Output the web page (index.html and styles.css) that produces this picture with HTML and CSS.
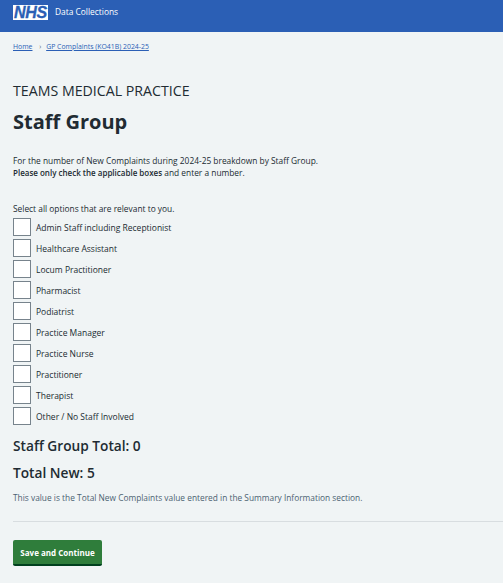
FILE: index.html
```html
<!DOCTYPE html>
<html lang="en">
<head>
<meta charset="UTF-8">
<title>Staff Group</title>
<link rel="stylesheet" href="styles.css">
</head>
<body>
<header class="top">
  <a class="logo" href="#"><span>NHS</span></a>
  <span class="service">Data Collections</span>
</header>
<nav class="crumbs">
  <a href="#">Home</a>
  <span class="sep">›</span>
  <a href="#">GP Complaints (KO41B) 2024-25</a>
</nav>
<main class="main">
  <p class="caption">TEAMS MEDICAL PRACTICE</p>
  <h1>Staff Group</h1>
  <p class="intro">For the number of New Complaints during 2024-25 breakdown by Staff Group.<br><b>Please only check the applicable boxes</b> and enter a number.</p>
  <p class="hint">Select all options that are relevant to you.</p>
  <ul class="options">
    <li><span class="box"></span>Admin Staff including Receptionist</li>
    <li><span class="box"></span>Healthcare Assistant</li>
    <li><span class="box"></span>Locum Practitioner</li>
    <li><span class="box"></span>Pharmacist</li>
    <li><span class="box"></span>Podiatrist</li>
    <li><span class="box"></span>Practice Manager</li>
    <li><span class="box"></span>Practice Nurse</li>
    <li><span class="box"></span>Practitioner</li>
    <li><span class="box"></span>Therapist</li>
    <li><span class="box"></span>Other / No Staff Involved</li>
  </ul>
  <h2 class="total-a">Staff Group Total: 0</h2>
  <h2 class="total-b">Total New: 5</h2>
  <p class="note">This value is the Total New Complaints value entered in the Summary Information section.</p>
  <hr class="rule">
  <button class="save" type="button">Save and Continue</button>
</main>
</body>
</html>
```

FILE: styles.css
```css
*{margin:0;padding:0;box-sizing:border-box;}
body{background:#f0f4f5;color:#212b32;font-family:"Open Sans","Noto Sans","Liberation Sans",sans-serif;font-size:8.5px;overflow:hidden;}
.top{height:32px;background:#2b5fb5;display:flex;align-items:flex-start;padding:5px 0 0 13px;gap:7px;}
.logo{width:35px;height:15px;background:#fff;display:flex;align-items:center;justify-content:center;text-decoration:none;}
.logo span{color:#2b5fb5;font:italic 700 16px/15px "Liberation Sans",sans-serif;letter-spacing:-0.3px;-webkit-text-stroke:0.3px #2b5fb5;}
.service{color:#fff;font-size:8.4px;line-height:14px;}
.crumbs{padding:10px 0 0 13px;height:39px;font-size:6.9px;line-height:10px;color:#4c6272;}
.crumbs a{color:#2b5fb5;}
.crumbs .sep{margin:0 3px 0 5px;}
.main{padding:0 0 0 13px;}
.caption{font-size:14.2px;line-height:18px;margin-top:11px;}
h1{font-size:20px;line-height:28px;font-weight:700;margin-top:8px;}
.intro{font-size:8.37px;line-height:12px;margin-top:19px;}
.intro b{font-size:8px;font-weight:600;}
.hint{font-size:8.37px;line-height:12px;margin-top:24px;}
.options{list-style:none;margin-top:3px;display:flex;flex-direction:column;gap:3px;}
.options li{display:flex;align-items:center;height:18px;font-size:8.5px;gap:5px;}
.box{width:18px;height:18px;background:#fff;border:1.5px solid #77838c;}
h2{font-size:13.7px;line-height:19px;font-weight:600;}
.total-a{margin-top:11px;}
.total-b{margin-top:8px;}
.note{font-size:8.35px;line-height:12px;color:#4c6272;margin-top:10px;}
.rule{border:0;border-top:1px solid #d8dde0;margin-top:17px;}
.save{display:block;margin-top:18px;width:89px;height:26px;background:#2f7d3b;border:0;border-bottom:2px solid #00401e;border-radius:2px;color:#fff;font:700 8px "Open Sans","Liberation Sans",sans-serif;}
```
